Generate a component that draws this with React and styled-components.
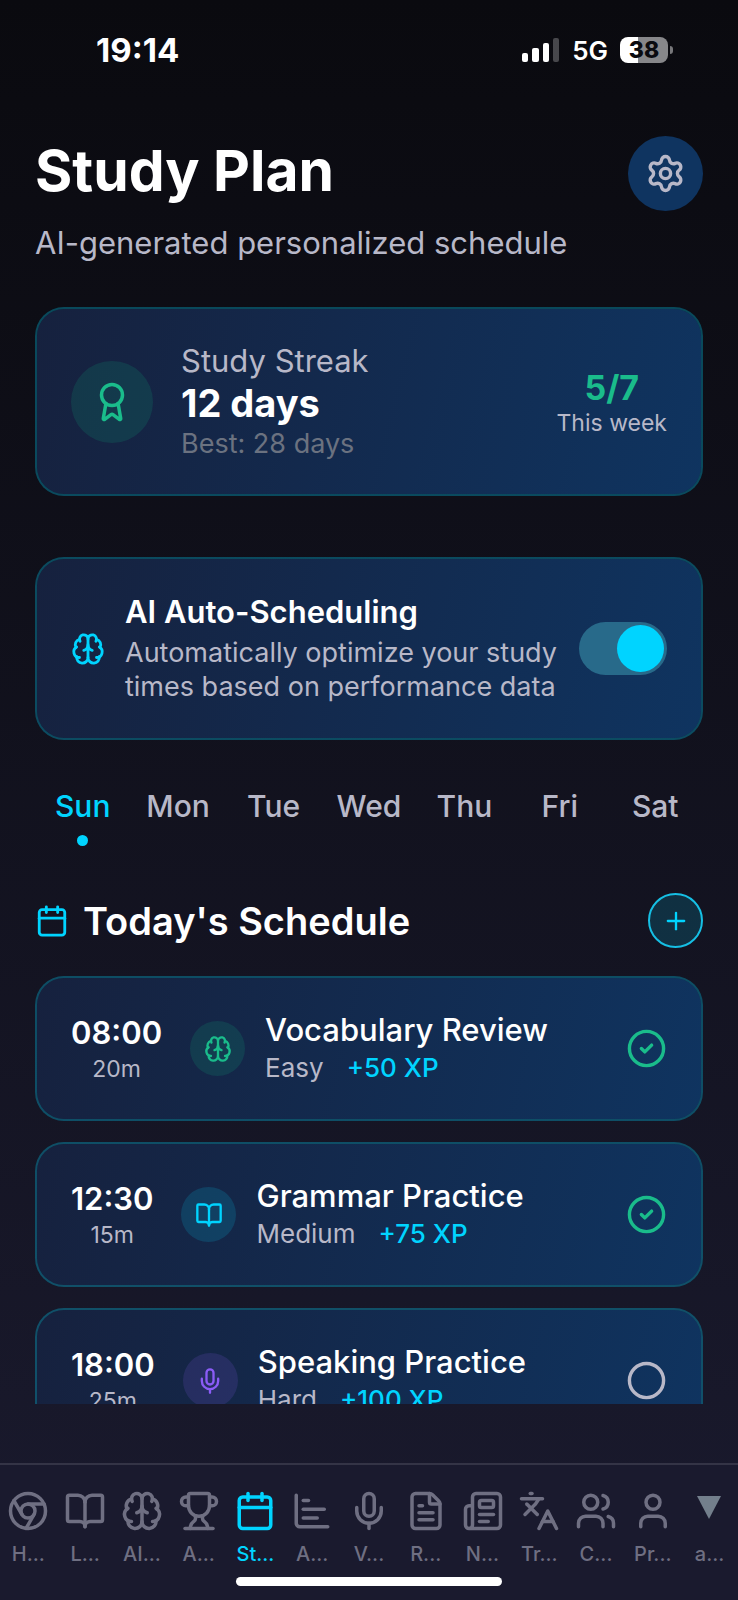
import React, { useState } from "react";
import styled, { createGlobalStyle } from "styled-components";
import {
  Award,
  BookOpen,
  Brain,
  Calendar,
  ChartBar,
  Chromium,
  Circle,
  CircleCheck,
  FileText,
  Languages,
  Mic,
  Newspaper,
  Plus,
  Settings,
  Trophy,
  User,
  Users,
} from "lucide-react";

const days = ["Sun", "Mon", "Tue", "Wed", "Thu", "Fri", "Sat"];

const sessions = [
  {
    id: "vocabulary",
    time: "08:00",
    length: "20m",
    title: "Vocabulary Review",
    level: "Easy",
    xp: 50,
    icon: Brain,
    color: "#1abc8b",
    tint: "rgba(16, 185, 129, 0.15)",
    done: true,
  },
  {
    id: "grammar",
    time: "12:30",
    length: "15m",
    title: "Grammar Practice",
    level: "Medium",
    xp: 75,
    icon: BookOpen,
    color: "#00d4ff",
    tint: "rgba(0, 212, 255, 0.15)",
    done: true,
  },
  {
    id: "speaking",
    time: "18:00",
    length: "25m",
    title: "Speaking Practice",
    level: "Hard",
    xp: 100,
    icon: Mic,
    color: "#8b5cf6",
    tint: "rgba(139, 92, 246, 0.15)",
    done: false,
  },
];

const tabs = [
  { id: "home", label: "H...", icon: Chromium },
  { id: "learn", label: "L...", icon: BookOpen },
  { id: "ai", label: "AI...", icon: Brain },
  { id: "achievements", label: "A...", icon: Trophy },
  { id: "study", label: "St...", icon: Calendar },
  { id: "analytics", label: "A...", icon: ChartBar },
  { id: "voice", label: "V...", icon: Mic },
  { id: "reading", label: "R...", icon: FileText },
  { id: "news", label: "N...", icon: Newspaper },
  { id: "translate", label: "Tr...", icon: Languages },
  { id: "community", label: "C...", icon: Users },
  { id: "profile", label: "Pr...", icon: User },
  { id: "auth", label: "a...", icon: MissingIcon },
];

function MissingIcon({ size }) {
  return (
    <svg width={size} height={size} viewBox="0 0 42 42">
      <path d="M8 6h24L20 29z" fill="#737f8c" />
    </svg>
  );
}

function SignalIcon() {
  return (
    <svg width="38" height="24" viewBox="0 0 38 24" fill="#fff">
      <rect x="0" y="15" width="6" height="9" rx="2" />
      <rect x="10" y="10" width="7" height="14" rx="2" />
      <rect x="21" y="5" width="6" height="19" rx="2" />
      <rect x="31" y="0" width="6" height="24" rx="2" opacity="0.25" />
    </svg>
  );
}

function Session({ item }) {
  const [done, setDone] = useState(item.done);
  const Icon = item.icon;

  return (
    <Card as="li">
      <Time>
        <TimeStart>{item.time}</TimeStart>
        <Small>{item.length}</Small>
      </Time>
      <Badge $size={55} $tint={item.tint} $color={item.color}>
        <Icon size={28} />
      </Badge>
      <SessionInfo>
        <SessionTitle>{item.title}</SessionTitle>
        <Meta>
          <span>{item.level}</span>
          <Xp>+{item.xp} XP</Xp>
        </Meta>
      </SessionInfo>
      <Tick $done={done}>
        <input
          type="checkbox"
          aria-label={`${item.title} completed`}
          checked={done}
          onChange={(e) => setDone(e.target.checked)}
        />
        {done ? <CircleCheck size={41} /> : <Circle size={41} />}
      </Tick>
    </Card>
  );
}

export default function App() {
  const [day, setDay] = useState("Sun");
  const [auto, setAuto] = useState(true);

  return (
    <Page>
      <GlobalStyle />

      <StatusBar>
        <Clock>19:14</Clock>
        <StatusIcons>
          <SignalIcon />
          <Network>5G</Network>
          <Battery>
            <BatteryBody>38</BatteryBody>
            <BatteryTip />
          </Battery>
        </StatusIcons>
      </StatusBar>

      <Content>
        <Header>
          <div>
            <Title>Study Plan</Title>
            <Subtitle>AI-generated personalized schedule</Subtitle>
          </div>
          <SettingsButton aria-label="Settings">
            <Settings size={41} />
          </SettingsButton>
        </Header>

        <Card>
          <Badge $size={82} $tint="rgba(16, 185, 129, 0.15)" $color="#1abc8b">
            <Award size={42} />
          </Badge>
          <StreakInfo>
            <StreakLabel>Study Streak</StreakLabel>
            <StreakDays>12 days</StreakDays>
            <StreakBest>Best: 28 days</StreakBest>
          </StreakInfo>
          <Week>
            <WeekCount>5/7</WeekCount>
            <Small>This week</Small>
          </Week>
        </Card>

        <AutoCard>
          <Brain size={34} color="#00d4ff" />
          <AutoInfo>
            <AutoTitle htmlFor="auto">AI Auto-Scheduling</AutoTitle>
            <AutoText>
              Automatically optimize your study times based on performance data
            </AutoText>
          </AutoInfo>
          <Switch
            id="auto"
            type="checkbox"
            role="switch"
            checked={auto}
            onChange={(e) => setAuto(e.target.checked)}
          />
        </AutoCard>

        <Days>
          {days.map((item) => (
            <Day key={item} $active={item === day} onClick={() => setDay(item)}>
              {item}
            </Day>
          ))}
        </Days>

        <SectionHeader>
          <Calendar size={34} color="#00d4ff" />
          <SectionTitle>Today's Schedule</SectionTitle>
          <AddButton aria-label="Add session">
            <Plus size={28} />
          </AddButton>
        </SectionHeader>

        <SessionList>
          {sessions.map((item) => (
            <Session key={item.id} item={item} />
          ))}
        </SessionList>
      </Content>

      <TabBar>
        <Tabs>
          {tabs.map(({ id, label, icon: Icon }) => (
            <Tab key={id} href={`#${id}`} $active={id === "study"}>
              <Icon size={42} />
              <span>{label}</span>
            </Tab>
          ))}
        </Tabs>
        <HomeIndicator />
      </TabBar>
    </Page>
  );
}

const GlobalStyle = createGlobalStyle`
  * {
    box-sizing: border-box;
  }

  body {
    margin: 0;
    background: #1a1a2e;
    color: #fff;
    font-family: Inter, "Liberation Sans", sans-serif;
  }

  h1, h2, h3, p, ul {
    margin: 0;
    padding: 0;
  }

  button {
    padding: 0;
    border: 0;
    background: none;
    color: inherit;
    font: inherit;
    cursor: pointer;
  }

  svg {
    display: block;
    flex-shrink: 0;
  }
`;

const Page = styled.div`
  display: flex;
  flex-direction: column;
  height: 100vh;
  background: linear-gradient(#0a0a0f, #1a1a2e);
`;

const StatusBar = styled.div`
  display: flex;
  align-items: center;
  justify-content: space-between;
  flex-shrink: 0;
  height: 100px;
  padding: 0 65px 0 96px;
`;

const Clock = styled.time`
  font-size: 33px;
  font-weight: 700;
`;

const StatusIcons = styled.div`
  display: flex;
  align-items: center;
  gap: 12px;
`;

const Network = styled.span`
  font-size: 26px;
  font-weight: 600;
`;

const Battery = styled.div`
  display: flex;
  align-items: center;
  gap: 2px;
`;

const BatteryBody = styled.div`
  width: 48px;
  height: 26px;
  border-radius: 8px;
  background: linear-gradient(90deg, #fff 38%, #87878a 38%);
  color: #0a0a0f;
  font-size: 23px;
  font-weight: 800;
  line-height: 26px;
  text-align: center;
`;

const BatteryTip = styled.div`
  width: 3px;
  height: 8px;
  border-radius: 0 3px 3px 0;
  background: #77777a;
`;

const Content = styled.main`
  flex: 1;
  min-height: 0;
  margin-bottom: 59px;
  padding: 36px 35px 0;
  overflow-y: auto;
  scrollbar-width: none;
`;

const Header = styled.header`
  display: flex;
  align-items: flex-start;
  justify-content: space-between;
  margin-bottom: 46px;
`;

const Title = styled.h1`
  font-size: 57px;
  font-weight: 700;
  line-height: 70px;
`;

const Subtitle = styled.p`
  margin-top: 19px;
  color: #b8b8c8;
  font-size: 31px;
  line-height: 36px;
`;

const SettingsButton = styled.button`
  display: flex;
  align-items: center;
  justify-content: center;
  width: 75px;
  height: 75px;
  border-radius: 50%;
  background: #0f3460;
  color: #b8b8c8;
`;

const Card = styled.section`
  display: flex;
  align-items: center;
  padding: 34px;
  border: 2px solid rgba(0, 212, 255, 0.3);
  border-radius: 29px;
  background: linear-gradient(104deg, #16213e, #0f3460) padding-box;
`;

const AutoCard = styled(Card)`
  margin-top: 61px;
`;

const Badge = styled.div`
  display: flex;
  align-items: center;
  justify-content: center;
  flex-shrink: 0;
  width: ${({ $size }) => $size}px;
  height: ${({ $size }) => $size}px;
  border-radius: 50%;
  background: ${({ $tint }) => $tint};
  color: ${({ $color }) => $color};
`;

const Small = styled.p`
  color: #b8b8c8;
  font-size: 23px;
  line-height: 28px;
`;

const StreakInfo = styled.div`
  flex: 1;
  margin-left: 28px;
`;

const StreakLabel = styled.p`
  color: #b8b8c8;
  font-size: 31px;
  line-height: 36px;
`;

const StreakDays = styled.p`
  font-size: 38px;
  font-weight: 700;
  line-height: 48px;
`;

const StreakBest = styled.p`
  color: #6b7280;
  font-size: 27px;
  line-height: 33px;
`;

const Week = styled.div`
  text-align: center;
`;

const WeekCount = styled.p`
  color: #1abc8b;
  font-size: 34px;
  font-weight: 700;
  line-height: 42px;
`;

const AutoInfo = styled.div`
  flex: 1;
  margin: 0 20px;
`;

const AutoTitle = styled.label`
  display: block;
  font-size: 31px;
  font-weight: 600;
  line-height: 38px;
`;

const AutoText = styled.p`
  margin-top: 5px;
  color: #b8b8c8;
  font-size: 27px;
  line-height: 34px;
`;

const Switch = styled.input`
  display: flex;
  align-items: center;
  flex-shrink: 0;
  justify-content: ${({ checked }) => (checked ? "flex-end" : "flex-start")};
  width: 88px;
  height: 53px;
  margin: 0;
  padding: 3px;
  border-radius: 27px;
  background: #286a8a;
  appearance: none;
  cursor: pointer;

  &::before {
    content: "";
    width: 47px;
    height: 47px;
    border-radius: 50%;
    background: ${({ checked }) => (checked ? "#00d4ff" : "#b8b8c8")};
  }
`;

const Days = styled.div`
  display: flex;
  margin-top: 48px;
`;

const Day = styled.button`
  display: flex;
  flex: 1;
  flex-direction: column;
  align-items: center;
  gap: 11px;
  color: ${({ $active }) => ($active ? "#00d4ff" : "#b8b8c8")};
  font-size: 30px;
  font-weight: 500;
  line-height: 36px;

  &::after {
    content: "";
    width: 11px;
    height: 11px;
    border-radius: 50%;
    background: ${({ $active }) => ($active ? "#00d4ff" : "transparent")};
  }
`;

const SectionHeader = styled.div`
  display: flex;
  align-items: center;
  margin: 47px 0 28px;
`;

const SectionTitle = styled.h2`
  flex: 1;
  margin-left: 14px;
  font-size: 38px;
  font-weight: 600;
  line-height: 46px;
`;

const AddButton = styled.button`
  display: flex;
  align-items: center;
  justify-content: center;
  width: 55px;
  height: 55px;
  border: 2px solid #16bfe4;
  border-radius: 50%;
  background: rgba(0, 212, 255, 0.15);
  color: #00d4ff;
`;

const SessionList = styled.ul`
  display: flex;
  flex-direction: column;
  gap: 21px;
  list-style: none;
`;

const Time = styled.div`
  margin-right: 28px;
  text-align: center;
`;

const TimeStart = styled.p`
  margin-bottom: 4px;
  font-size: 31px;
  font-weight: 600;
  line-height: 36px;
`;

const SessionInfo = styled.div`
  flex: 1;
  margin-left: 20px;
`;

const SessionTitle = styled.h3`
  font-size: 31px;
  font-weight: 500;
  line-height: 36px;
`;

const Meta = styled.p`
  display: flex;
  gap: 23px;
  margin-top: 3px;
  color: #b8b8c8;
  font-size: 26px;
  line-height: 34px;
`;

const Xp = styled.span`
  color: #00d4ff;
  font-weight: 500;
`;

const Tick = styled.label`
  display: flex;
  position: relative;
  color: ${({ $done }) => ($done ? "#1abc8b" : "#b8b8c8")};

  & input {
    position: absolute;
    inset: 0;
    margin: 0;
    opacity: 0;
    cursor: pointer;
  }
`;

const TabBar = styled.nav`
  flex-shrink: 0;
  padding: 25px 0 14px;
  border-top: 2px solid #343446;
  background: #1a1a2e;
`;

const Tabs = styled.div`
  display: flex;
`;

const Tab = styled.a`
  display: flex;
  flex: 1;
  flex-direction: column;
  align-items: center;
  gap: 10px;
  min-width: 0;
  color: ${({ $active }) => ($active ? "#00d4ff" : "#6f6f82")};
  font-size: 20px;
  font-weight: 500;
  line-height: 24px;
  text-decoration: none;
`;

const HomeIndicator = styled.div`
  width: 36%;
  height: 9px;
  margin: 11px auto 0;
  border-radius: 5px;
  background: #fff;
`;
